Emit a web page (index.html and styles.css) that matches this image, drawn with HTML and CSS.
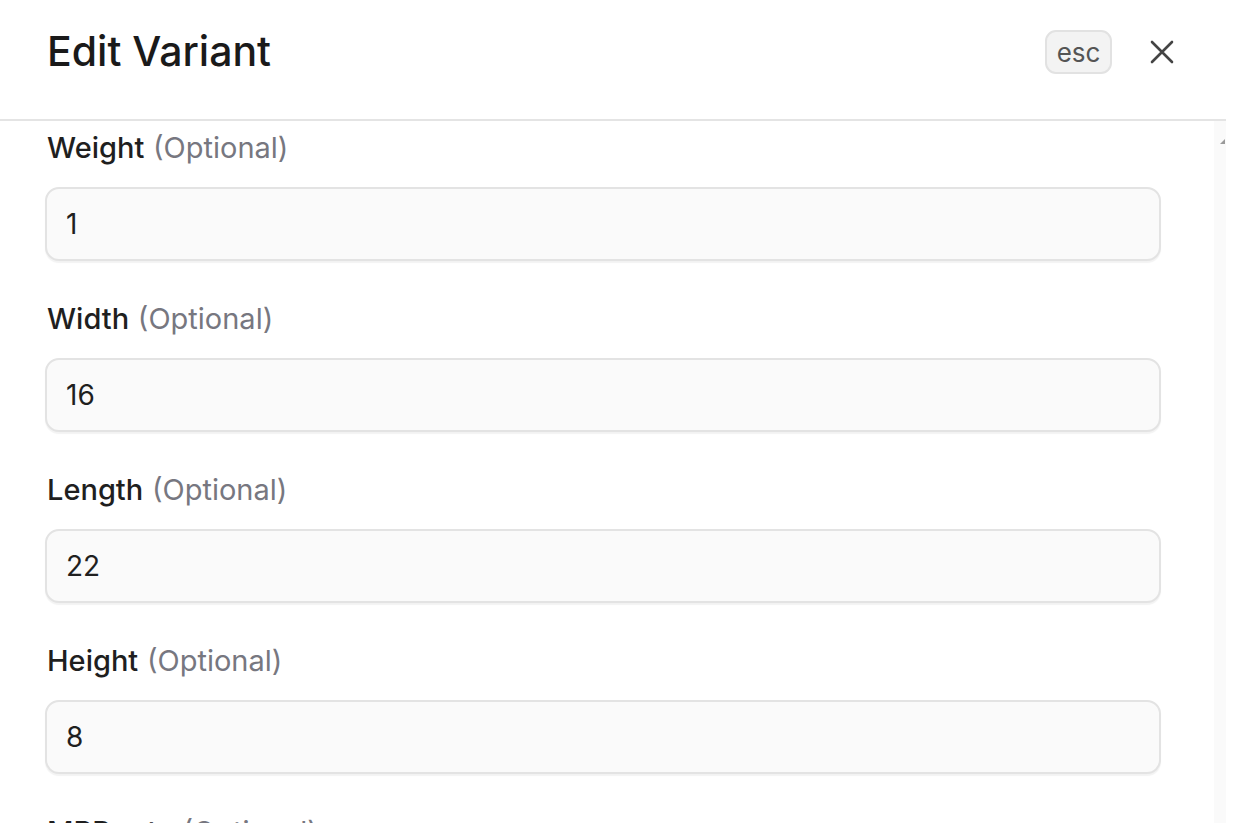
FILE: index.html
```html
<!DOCTYPE html>
<html lang="en">
<head>
<meta charset="utf-8">
<title>Edit Variant</title>
<link rel="stylesheet" href="styles.css">
</head>
<body>
<div class="panel">
  <header class="header">
    <h1 class="title">Edit Variant</h1>
    <div class="actions">
      <span class="kbd">esc</span>
      <button class="close" aria-label="Close">
        <svg width="24" height="24" viewBox="0 0 24 24" fill="none" stroke="#444" stroke-width="2.6" stroke-linecap="round"><path d="M2 2L22 22M22 2L2 22"/></svg>
      </button>
    </div>
  </header>
  <div class="body">
    <form class="form">
      <div class="field">
        <label class="label">Weight <span class="opt">(Optional)</span></label>
        <div class="input">1</div>
      </div>
      <div class="field">
        <label class="label">Width <span class="opt">(Optional)</span></label>
        <div class="input">16</div>
      </div>
      <div class="field">
        <label class="label">Length <span class="opt">(Optional)</span></label>
        <div class="input">22</div>
      </div>
      <div class="field">
        <label class="label">Height <span class="opt">(Optional)</span></label>
        <div class="input">8</div>
      </div>
      <div class="field">
        <label class="label">MRP rate <span class="opt">(Optional)</span></label>
        <div class="input">&nbsp;</div>
      </div>
    </form>
    <div class="scrollbar"><span class="arrow"></span></div>
  </div>
</div>
</body>
</html>
```

FILE: styles.css
```css
* { box-sizing: border-box; }
html, body { margin: 0; padding: 0; height: 100%; background: #fff; overflow: hidden; }
body { font-family: Inter, "Noto Sans", sans-serif; color: #1c1c1c; }

.panel {
  width: 1226px;
  height: 823px;
  display: flex;
  flex-direction: column;
}

.header {
  height: 121px;
  flex: none;
  display: flex;
  align-items: center;
  justify-content: space-between;
  padding: 0 52px 16px 47px;
  border-bottom: 2px solid #e4e4e4;
}
.title {
  margin: 0;
  font-size: 41px;
  font-weight: 500;
  color: #1a1a1a;
  line-height: 1;
}
.actions { display: flex; align-items: center; gap: 38px; }
.kbd {
  display: inline-flex;
  align-items: center;
  justify-content: center;
  width: 67px;
  height: 44px;
  border: 2px solid #e2e2e2;
  border-radius: 11px;
  background: #f3f3f3;
  color: #555;
  font-size: 26px;
  padding-top: 1px;
}
.close {
  border: 0;
  background: none;
  padding: 0;
  width: 24px;
  height: 24px;
  display: flex;
}

.body {
  flex: 1;
  display: flex;
  min-height: 0;
  overflow: hidden;
}
.form {
  flex: 1;
  padding: 7px 53px 0 45px;
  display: flex;
  flex-direction: column;
  gap: 38px;
}
.field { display: flex; flex-direction: column; gap: 19px; }
.label {
  display: block;
  height: 40px;
  line-height: 40px;
  padding-left: 2px;
  font-size: 29px;
  font-weight: 500;
  color: #1f1f1f;
  word-spacing: 1px;
}
.opt { font-weight: 400; color: #777780; }
.input {
  height: 74px;
  border: 2px solid #e3e3e3;
  border-radius: 14px;
  background: #fafafa;
  box-shadow: 0 2px 1px rgba(0,0,0,0.05);
  display: flex;
  align-items: center;
  padding: 0 19px;
  font-size: 28px;
  color: #1f1f1f;
}

.scrollbar {
  width: 12px;
  flex: none;
  background: #fafafa;
  position: relative;
}
.arrow {
  position: absolute;
  top: 18px;
  right: 1px;
  width: 0;
  height: 0;
  border-left: 5px solid transparent;
  border-bottom: 5px solid #9a9a9a;
}
```
